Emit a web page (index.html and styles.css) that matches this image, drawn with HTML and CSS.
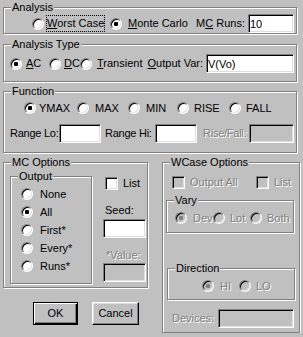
FILE: index.html
```html
<!DOCTYPE html>
<html lang="en">
<head>
  <meta charset="UTF-8">
  <title>Monte Carlo / Worst Case</title>
  <link rel="stylesheet" href="styles.css">
</head>
<body>
  <div class="dialog">

    <!-- Analysis -->
    <fieldset class="group top-group">
      <legend>Analysis</legend>
      <div class="row analysis-row">
        <label class="opt worst"><input class="radio" type="radio" name="analysis"><span class="focus"><u>W</u>orst Case</span></label>
        <label class="opt monte"><input class="radio" type="radio" name="analysis" checked><span><u>M</u>onte Carlo</span></label>
        <label class="field-label" for="mcRuns">M<u>C</u> Runs:</label>
        <input id="mcRuns" class="text runs-input" type="text" value="10">
      </div>
    </fieldset>

    <!-- Analysis Type -->
    <fieldset class="group top-group type-group">
      <legend>Analysis Type</legend>
      <div class="row type-row">
        <label class="opt ac"><input class="radio" type="radio" name="atype" checked><span><u>A</u>C</span></label>
        <label class="opt dc"><input class="radio" type="radio" name="atype"><span><u>D</u>C</span></label>
        <label class="opt tran"><input class="radio" type="radio" name="atype"><span><u>T</u>ransient</span></label>
        <label class="field-label" for="outVar"><u>O</u>utput Var:</label>
        <input id="outVar" class="text outvar-input" type="text" value="V(Vo)">
      </div>
    </fieldset>

    <!-- Function -->
    <fieldset class="group top-group func-group">
      <legend>Function</legend>
      <div class="row func-row">
        <label class="opt ymax"><input class="radio" type="radio" name="func" checked><span>YMAX</span></label>
        <label class="opt fmax"><input class="radio" type="radio" name="func"><span>MAX</span></label>
        <label class="opt fmin"><input class="radio" type="radio" name="func"><span>MIN</span></label>
        <label class="opt rise"><input class="radio" type="radio" name="func"><span>RISE</span></label>
        <label class="opt fall"><input class="radio" type="radio" name="func"><span>FALL</span></label>
      </div>
      <div class="row range-row">
        <label class="range-label lo">Range Lo:</label>
        <input class="text range-input" type="text">
        <label class="range-label hi">Range Hi:</label>
        <input class="text range-input" type="text">
        <label class="range-label rf off">Rise/Fall:</label>
        <input class="text rf-input" type="text" disabled>
      </div>
    </fieldset>

    <div class="lower">
      <div class="left-col">

        <!-- MC Options -->
        <fieldset class="group mc">
          <legend>MC Options</legend>
          <div class="mc-body">
            <fieldset class="group output">
              <legend>Output</legend>
              <div class="output-list">
                <label class="opt out-opt"><input class="radio" type="radio" name="out"><span>None</span></label>
                <label class="opt out-opt"><input class="radio" type="radio" name="out" checked><span>All</span></label>
                <label class="opt out-opt"><input class="radio" type="radio" name="out"><span>First*</span></label>
                <label class="opt out-opt"><input class="radio" type="radio" name="out"><span>Every*</span></label>
                <label class="opt out-opt"><input class="radio" type="radio" name="out"><span>Runs*</span></label>
              </div>
            </fieldset>
            <div class="mc-side">
              <label class="opt check-opt"><input class="check" type="checkbox"><span>List</span></label>
              <label class="side-label seed-label">Seed:</label>
              <input class="text side-input" type="text">
              <label class="side-label value-label off">*Value:</label>
              <input class="text side-input value-input" type="text" disabled>
            </div>
          </div>
        </fieldset>

        <div class="buttons">
          <button class="btn btn-default ok">OK</button>
          <button class="btn cancel">Cancel</button>
        </div>
      </div>

      <!-- WCase Options -->
      <fieldset class="group wcase">
        <legend>WCase Options</legend>
        <div class="row wcase-checks">
          <label class="opt check-opt w-out"><input class="check" type="checkbox" disabled><span class="off">Output All</span></label>
          <label class="opt check-opt"><input class="check" type="checkbox" disabled><span class="off">List</span></label>
        </div>

        <fieldset class="group vary">
          <legend>Vary</legend>
          <div class="row vary-row">
            <label class="opt dev"><input class="radio" type="radio" name="vary" checked disabled><span class="off">Dev</span></label>
            <label class="opt lot"><input class="radio" type="radio" name="vary" disabled><span class="off">Lot</span></label>
            <label class="opt both"><input class="radio" type="radio" name="vary" disabled><span class="off">Both</span></label>
          </div>
        </fieldset>

        <fieldset class="group direction">
          <legend>Direction</legend>
          <div class="row dir-row">
            <label class="opt hi-opt"><input class="radio" type="radio" name="dir" checked disabled><span class="off">HI</span></label>
            <label class="opt lo-opt"><input class="radio" type="radio" name="dir" disabled><span class="off">LO</span></label>
          </div>
        </fieldset>

        <div class="row devices-row">
          <label class="devices-label off">Devices:</label>
          <input class="text devices-input" type="text" disabled>
        </div>
      </fieldset>
    </div>

  </div>
</body>
</html>
```

FILE: styles.css
```css
body {
  margin: 0;
  background: #c0c0c0;
  font-family: "Liberation Sans", Arial, sans-serif;
  font-size: 11px;
  line-height: 13px;
  color: #000;
}
.dialog {
  padding: 1px 0 0 3px;
}

/* etched group boxes */
.group {
  box-sizing: border-box;
  margin: 0;
  padding: 0;
  min-width: 0;
  border: 1px solid #808080;
  box-shadow: inset 1px 1px #fff, 1px 1px #fff;
}
.group > legend {
  margin-left: 7px;
  padding: 0 1px;
  line-height: 13px;
  background: #c0c0c0;
}
.top-group {
  width: 294px;
}
.type-group {
  margin-top: 4px;
}
.func-group {
  margin-top: 3px;
}

.row {
  display: flex;
  align-items: center;
}
.opt {
  display: inline-flex;
  align-items: center;
  flex: none;
  white-space: nowrap;
}
.off {
  color: #808080;
  text-shadow: 1px 1px 0 #fff;
}

/* controls */
.radio {
  -webkit-appearance: none;
  appearance: none;
  box-sizing: border-box;
  flex: none;
  width: 12px;
  height: 12px;
  margin: 0;
  border-radius: 50%;
  border: 1px solid;
  border-color: #808080 #fff #fff #808080;
  box-shadow: inset 1px 1px #000, inset -1px -1px #dfdfdf;
  background: #fff;
}
.radio:checked {
  background: radial-gradient(circle, #000 0 2px, #fff 2.5px);
}
.radio:disabled {
  background: #c0c0c0;
}
.radio:disabled:checked {
  background: radial-gradient(circle, #808080 0 2px, #c0c0c0 2.5px);
}
.check {
  -webkit-appearance: none;
  appearance: none;
  box-sizing: border-box;
  flex: none;
  width: 13px;
  height: 13px;
  margin: 0;
  border: 1px solid;
  border-color: #808080 #fff #fff #808080;
  box-shadow: inset 1px 1px #000, inset -1px -1px #dfdfdf;
  background: #fff;
}
.check:disabled {
  background: #c0c0c0;
}
.text {
  box-sizing: border-box;
  height: 19px;
  margin: 0;
  padding: 0 1px;
  border: 1px solid;
  border-color: #808080 #fff #fff #808080;
  box-shadow: inset 1px 1px #000, inset -1px -1px #dfdfdf;
  background: #fff;
  font: inherit;
  color: #000;
  outline: none;
}
.text:disabled {
  background: #c0c0c0;
}
.field-label {
  margin-left: auto;
  margin-right: 3px;
  white-space: nowrap;
}

/* Analysis */
.analysis-row {
  height: 19px;
}
.worst {
  width: 78px;
  margin-left: 28px;
  gap: 2px;
}
.focus {
  border: 1px dotted #000;
  padding: 1px 0;
}
.monte {
  gap: 6px;
}
.runs-input {
  width: 46px;
  margin-right: 2px;
}

/* Analysis Type */
.type-row {
  height: 19px;
  padding: 3px 0 8px;
}
.ac {
  width: 39px;
  margin-left: 6px;
  gap: 4px;
}
.dc {
  width: 31px;
  gap: 3px;
}
.tran {
  gap: 5px;
}
.outvar-input {
  width: 88px;
  margin-right: 2px;
}

/* Function */
.func-row {
  height: 14px;
  padding-top: 3px;
}
.ymax {
  width: 53px;
  margin-left: 20px;
  gap: 3px;
}
.fmax {
  width: 51px;
  gap: 6px;
}
.fmin {
  width: 49px;
  gap: 6px;
}
.rise {
  width: 52px;
  gap: 5px;
}
.fall {
  gap: 5px;
}
.range-row {
  height: 19px;
  padding: 9px 0;
}
.range-label {
  flex: none;
  white-space: nowrap;
  letter-spacing: -0.25px;
}
.lo {
  width: 49px;
  margin-left: 6px;
}
.hi {
  width: 50px;
  margin-left: 4px;
}
.rf {
  width: 46px;
  margin-left: 6px;
}
.range-input {
  width: 42px;
}
.rf-input {
  width: 45px;
}

/* lower half */
.lower {
  display: flex;
  align-items: flex-start;
  margin-top: 3px;
}
.left-col {
  width: 145px;
}
.mc {
  width: 145px;
}
.mc-body {
  display: flex;
  align-items: flex-start;
  padding: 1px 0 3px 6px;
}
.output {
  width: 82px;
}
.output-list {
  display: flex;
  flex-direction: column;
  gap: 4px;
  padding: 4px 0 10px 10px;
}
.out-opt {
  height: 14px;
  gap: 7px;
}
.mc-side {
  display: flex;
  flex-direction: column;
  align-items: flex-start;
  width: 43px;
  margin-left: 11px;
  padding-top: 7px;
}
.check-opt {
  height: 13px;
  gap: 5px;
}
.mc-side .check-opt {
  margin-left: 2px;
}
.seed-label {
  margin: 14px 0 0 2px;
}
.value-label {
  margin: 11px 0 0 3px;
}
.side-input {
  width: 43px;
  margin-top: 2px;
}
.value-input {
  margin-top: 1px;
}

.buttons {
  display: flex;
  margin-top: 14px;
  padding-left: 30px;
}
.btn {
  box-sizing: border-box;
  height: 23px;
  margin: 0;
  padding: 0;
  font: inherit;
  color: #000;
  background: #c0c0c0;
  border: 1px solid;
  border-color: #fff #000 #000 #fff;
  box-shadow: inset -1px -1px #808080, inset 1px 1px #dfdfdf;
}
.btn-default {
  border-color: #000;
  box-shadow: inset 1px 1px #fff, inset -1px -1px #000, inset -2px -2px #808080;
}
.ok {
  width: 45px;
}
.cancel {
  width: 47px;
  margin-left: 14px;
}

/* WCase Options */
.wcase {
  width: 138px;
  margin-left: 14px;
}
.wcase-checks {
  padding: 7px 0 0 9px;
}
.w-out {
  width: 84px;
}
.vary {
  width: 128px;
  margin: 5px 0 0 3px;
}
.vary-row {
  height: 14px;
  padding: 4px 0 7px;
}
.dev {
  width: 38px;
  margin-left: 8px;
  gap: 6px;
}
.lot {
  width: 37px;
  gap: 5px;
}
.both {
  gap: 5px;
}
.direction {
  width: 128px;
  margin: 29px 0 0 4px;
}
.dir-row {
  height: 14px;
  padding: 4px 0 6px;
}
.hi-opt {
  width: 37px;
  margin-left: 34px;
  gap: 6px;
}
.lo-opt {
  gap: 5px;
}
.devices-row {
  margin-top: 9px;
  padding: 0 0 4px 9px;
}
.devices-label {
  width: 46px;
  flex: none;
}
.devices-input {
  width: 76px;
}
```
